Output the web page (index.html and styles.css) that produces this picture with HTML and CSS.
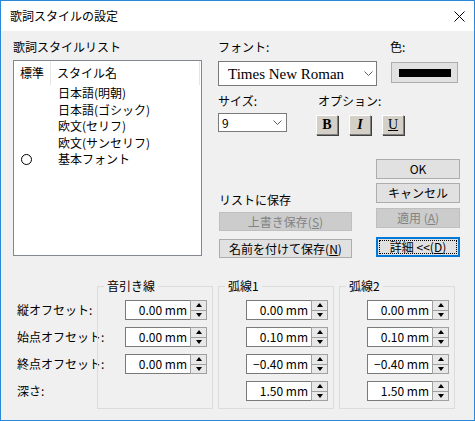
FILE: index.html
```html
<!DOCTYPE html>
<html lang="ja">
<head>
<meta charset="utf-8">
<title>歌詞スタイルの設定</title>
<link rel="stylesheet" href="styles.css">
</head>
<body>
<div class="window">
  <div class="titlebar">
    <span class="title">歌詞スタイルの設定</span>
    <svg class="close" width="11" height="11" viewBox="0 0 11 11"><path d="M0.5 0.5 L10.5 10.5 M10.5 0.5 L0.5 10.5" stroke="#000" stroke-width="1" fill="none"/></svg>
  </div>
  <div class="content">
    <div class="top">
      <div class="left">
        <div class="label">歌詞スタイルリスト</div>
        <div class="listbox">
          <div class="list-head">
            <div class="col-std head-std">標準</div>
            <div class="col-name head-name">スタイル名</div>
          </div>
          <div class="list-row"><div class="col-std"></div><div class="col-name">日本語(明朝)</div></div>
          <div class="list-row"><div class="col-std"></div><div class="col-name">日本語(ゴシック)</div></div>
          <div class="list-row"><div class="col-std"></div><div class="col-name">欧文(セリフ)</div></div>
          <div class="list-row"><div class="col-std"></div><div class="col-name">欧文(サンセリフ)</div></div>
          <div class="list-row"><div class="col-std"><span class="circle"></span></div><div class="col-name">基本フォント</div></div>
        </div>
      </div>
      <div class="right">
        <div class="row1">
          <div class="font-col">
            <div class="label">フォント:</div>
            <div class="select select-font">
              <span class="font-name">Times New Roman</span>
              <svg class="chev" width="9" height="5" viewBox="0 0 9 5"><path d="M0.5 0.5 L4.5 4.5 L8.5 0.5" stroke="#606060" stroke-width="1" fill="none"/></svg>
            </div>
          </div>
          <div class="color-col">
            <div class="label">色:</div>
            <div class="color-btn"><span class="color-bar"></span></div>
          </div>
        </div>
        <div class="row2">
          <div class="size-col">
            <div class="label">サイズ:</div>
            <div class="select select-size">
              <span class="size-val">9</span>
              <svg class="chev" width="9" height="5" viewBox="0 0 9 5"><path d="M0.5 0.5 L4.5 4.5 L8.5 0.5" stroke="#606060" stroke-width="1" fill="none"/></svg>
            </div>
          </div>
          <div class="opt-col">
            <div class="label opt-label">オプション:</div>
            <div class="opt-btns">
              <div class="opt-btn opt-b">B</div>
              <div class="opt-btn opt-i">I</div>
              <div class="opt-btn opt-u">U</div>
            </div>
          </div>
        </div>
        <div class="row3">
          <div class="save-col">
            <div class="label save-label">リストに保存</div>
            <div class="btn btn-disabled btn-save1">上書き保存(<u>S</u>)</div>
            <div class="btn btn-save2">名前を付けて保存(<u>N</u>)</div>
          </div>
          <div class="btn-col">
            <div class="btn btn-ok">OK</div>
            <div class="btn btn-cancel">キャンセル</div>
            <div class="btn btn-disabled btn-apply">適用 (<u>A</u>)</div>
            <div class="btn btn-default btn-detail"><span class="focus">詳細 &lt;&lt;(<u>D</u>)</span></div>
          </div>
        </div>
      </div>
    </div>
    <div class="bottom">
      <div class="row-labels">
        <div class="row-label">縦オフセット:</div>
        <div class="row-label">始点オフセット:</div>
        <div class="row-label">終点オフセット:</div>
        <div class="row-label">深さ:</div>
      </div>
      <fieldset class="group">
        <legend>音引き線</legend>
        <div class="spin"><div class="field">0.00 mm</div><div class="spin-btns"><span class="up"></span><span class="down"></span></div></div>
        <div class="spin"><div class="field">0.00 mm</div><div class="spin-btns"><span class="up"></span><span class="down"></span></div></div>
        <div class="spin"><div class="field">0.00 mm</div><div class="spin-btns"><span class="up"></span><span class="down"></span></div></div>
      </fieldset>
      <fieldset class="group">
        <legend>弧線1</legend>
        <div class="spin"><div class="field">0.00 mm</div><div class="spin-btns"><span class="up"></span><span class="down"></span></div></div>
        <div class="spin"><div class="field">0.10 mm</div><div class="spin-btns"><span class="up"></span><span class="down"></span></div></div>
        <div class="spin"><div class="field">−0.40 mm</div><div class="spin-btns"><span class="up"></span><span class="down"></span></div></div>
        <div class="spin"><div class="field">1.50 mm</div><div class="spin-btns"><span class="up"></span><span class="down"></span></div></div>
      </fieldset>
      <fieldset class="group">
        <legend>弧線2</legend>
        <div class="spin"><div class="field">0.00 mm</div><div class="spin-btns"><span class="up"></span><span class="down"></span></div></div>
        <div class="spin"><div class="field">0.10 mm</div><div class="spin-btns"><span class="up"></span><span class="down"></span></div></div>
        <div class="spin"><div class="field">−0.40 mm</div><div class="spin-btns"><span class="up"></span><span class="down"></span></div></div>
        <div class="spin"><div class="field">1.50 mm</div><div class="spin-btns"><span class="up"></span><span class="down"></span></div></div>
      </fieldset>
    </div>
  </div>
</div>
</body>
</html>
```
FILE: styles.css
```css
* { box-sizing: border-box; }
html, body { margin: 0; padding: 0; }
body {
  font-family: "Noto Sans CJK JP", "Noto Sans", sans-serif;
  font-size: 12px;
  color: #000;
  background: #fff;
}
.window {
  width: 475px;
  height: 421px;
  border: 1px solid #2b87d8;
  background: #f0f0f0;
  overflow: hidden;
}
.titlebar {
  height: 30px;
  background: #fff;
  display: flex;
  align-items: center;
  justify-content: space-between;
  padding: 0 9px 0 9px;
}
.title { font-size: 12px; line-height: 16px; }
.close { display: block; }

.content { padding-left: 12px; }
.label { line-height: 16px; height: 16px; white-space: nowrap; }

.top { display: flex; height: 226px; }
.left { width: 189px; }
.left .label { margin-top: 8px; }
.listbox {
  margin-top: 5px;
  width: 189px;
  height: 196px;
  border: 1px solid #828790;
  background: #fff;
}
.list-head { display: flex; height: 24px; width: 186px; border-right: 1px solid #e5e5e5; }
.list-head .col-std, .list-head .col-name { line-height: 24px; }
.col-std { width: 37px; padding-left: 6px; flex: none; }
.head-std { border-right: 1px solid #e5e5e5; }
.col-name { padding-left: 6px; white-space: nowrap; }
.head-name { padding-left: 6px; }
.list-row { display: flex; height: 16.5px; line-height: 16.5px; }
.list-row .col-name { padding-left: 7px; }
.list-row .col-std { padding-left: 7px; display: flex; align-items: center; }
.circle {
  display: block;
  width: 11px;
  height: 11px;
  border: 1px solid #000;
  border-radius: 50%;
}

.right { margin-left: 16px; width: 243px; }
.row1 { display: flex; }
.row1 .label { margin-top: 8px; }
.font-col { width: 159px; }
.select {
  background: #fff;
  border: 1px solid #7a7a7a;
  display: flex;
  align-items: center;
  justify-content: space-between;
}
.select-font {
  margin-top: 6px;
  height: 25px;
  width: 159px;
  padding: 0 3px 0 9px;
}
.font-name {
  font-family: "Liberation Serif", "Times New Roman", serif;
  font-size: 15px;
  line-height: 20px;
  color: #000;
}
.chev { display: block; }
.color-col { margin-left: 13px; }
.color-btn {
  margin-top: 7px;
  margin-left: 1px;
  width: 67px;
  height: 21px;
  border: 1px solid #adadad;
  background: #e1e1e1;
  display: flex;
  align-items: center;
  justify-content: center;
}
.color-bar { display: block; width: 52px; height: 8px; background: #000; }

.row2 { display: flex; }
.row2 .label { margin-top: 7px; }
.size-col { width: 68px; }
.select-size {
  margin-top: 4px;
  height: 19px;
  width: 69px;
  padding: 0 4px 0 3px;
}
.size-val { line-height: 16px; }
.opt-col { margin-left: 30px; }
.opt-label { padding-left: 2px; }
.opt-btns { display: flex; gap: 11px; margin-top: 6px; }
.opt-btn {
  width: 22px;
  height: 20px;
  background: #d4d0c8;
  border-top: 1px solid #fff;
  border-left: 1px solid #fff;
  border-right: 1px solid #808080;
  border-bottom: 1px solid #808080;
  box-shadow: 1px 1px 0 #404040;
  font-family: "Liberation Serif", "Times New Roman", serif;
  font-size: 14px;
  line-height: 18px;
  text-align: center;
}
.opt-b { font-weight: bold; }
.opt-i { font-weight: bold; font-style: italic; }
.opt-u { text-decoration: underline; }

.row3 { display: flex; }
.save-col { margin-left: 1px; width: 133px; }
.save-label { margin-top: 57px; }
.btn {
  height: 20px;
  border: 1px solid #adadad;
  background: #e1e1e1;
  text-align: center;
  line-height: 18px;
  white-space: nowrap;
}
.btn-disabled { background: #cccccc; border-color: #bfbfbf; color: #838383; }
.btn-save1 { margin-top: 4px; height: 19px; line-height: 17px; }
.btn-save2 { margin-top: 8px; height: 19px; line-height: 17px; }
.btn-col { margin-left: 24px; width: 84px; padding-top: 24px; }
.btn-cancel { margin-top: 4px; }
.btn-apply { margin-top: 5px; }
.btn-detail { margin-top: 9px; }
.btn-default { border: 2px solid #0078d7; padding: 1px; line-height: 14px; }
.focus {
  display: block;
  height: 100%;
  border: 1px dotted #000;
  line-height: 12px;
}

.bottom { display: flex; margin-top: 21px; height: 131px; }
.row-labels { width: 84px; padding-left: 4px; padding-top: 22px; }
.row-label { height: 20px; line-height: 20px; margin-bottom: 7px; white-space: nowrap; }
.group {
  width: 116px;
  height: 131px;
  margin: 0 5px 0 0;
  padding: 0;
  border: 1px solid #dcdcdc;
  min-width: 0;
}
legend {
  margin-left: 6px;
  padding: 0 3px;
  line-height: 16px;
  font-size: 12px;
}
.spin {
  display: flex;
  width: 82px;
  height: 20px;
  margin-left: 27px;
  margin-top: 7px;
}
.spin:first-of-type { margin-top: 6px; }
.field {
  width: 65px;
  height: 20px;
  border: 1px solid #7a7a7a;
  border-right: none;
  background: #fff;
  text-align: right;
  padding-right: 3px;
  line-height: 18px;
  white-space: nowrap;
}
.spin-btns {
  width: 17px;
  height: 20px;
  border: 1px solid #a0a0a0;
  display: flex;
  flex-direction: column;
  background: #e8e8e8;
}
.spin-btns span {
  flex: 1;
  display: flex;
  align-items: center;
  justify-content: center;
  position: relative;
}
.spin-btns .up { border-bottom: 1px solid #a0a0a0; }
.spin-btns .up::after {
  content: "";
  border-left: 3.5px solid transparent;
  border-right: 3.5px solid transparent;
  border-bottom: 4px solid #000;
}
.spin-btns .down::after {
  content: "";
  border-left: 3.5px solid transparent;
  border-right: 3.5px solid transparent;
  border-top: 4px solid #000;
}
```
